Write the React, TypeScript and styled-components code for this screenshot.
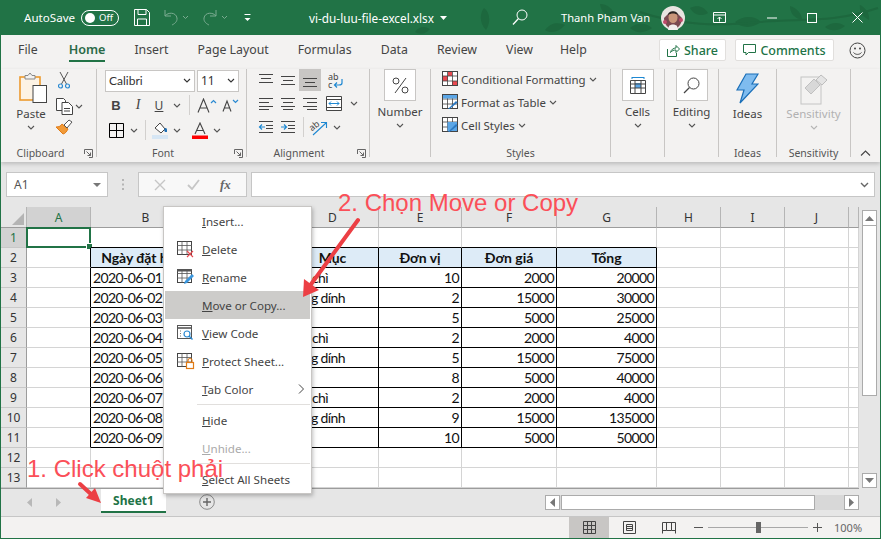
import * as React from 'react'
import styled, { createGlobalStyle } from 'styled-components'

const GlobalStyle = createGlobalStyle`
  html, body { margin: 0; padding: 0; background: #fff; }
  * { box-sizing: border-box; }
`

const UI = `"Noto Sans", "Open Sans", sans-serif`
const GREEN = '#217346'

const Frame = styled.div`
  position: relative;
  width: 881px;
  height: 539px;
  overflow: hidden;
  display: flex;
  flex-direction: column;
  border: 1px solid ${GREEN};
  border-top: 0;
  background: #f3f2f1;
  font-family: ${UI};
  font-size: 12px;
  color: #444;
`

/* title bar */
const TitleBar = styled.div`
  position: relative;
  flex: none;
  height: 35px;
  margin: 0 -1px;
  padding-left: 24px;
  display: flex;
  align-items: center;
  background: ${GREEN};
  color: #fff;
  overflow: hidden;
`
const Leaves = styled.svg`
  position: absolute;
  left: 0;
  top: 0;
`
const TitleItem = styled.div<{ $ml?: number; $size?: number }>`
  position: relative;
  flex: none;
  margin-left: ${({ $ml }) => $ml ?? 0}px;
  display: flex;
  align-items: center;
  justify-content: center;
  white-space: nowrap;
  font-size: ${({ $size }) => $size ?? 11.6}px;
`
const Toggle = styled.div`
  position: relative;
  width: 38px;
  height: 16px;
  margin-left: 6px;
  flex: none;
  border: 1px solid #fff;
  border-radius: 8px;
  font-size: 9.5px;
  line-height: 14px;
  padding-left: 17px;
  &::before {
    content: '';
    position: absolute;
    left: 3px;
    top: 2px;
    width: 10px;
    height: 10px;
    border-radius: 50%;
    background: #fff;
  }
`

/* tabs */
const TabRow = styled.div`
  flex: none;
  height: 34px;
  display: flex;
  align-items: flex-start;
  padding-left: 17px;
  gap: 29px;
`
const Tab = styled.div<{ $active?: boolean; $mr?: number }>`
  position: relative;
  height: 27px;
  line-height: 30px;
  margin-right: ${({ $mr }) => $mr ?? 0}px;
  font-size: ${({ $active }) => ($active ? 12.6 : 12.3)}px;
  white-space: nowrap;
  font-weight: ${({ $active }) => ($active ? 600 : 400)};
  color: ${({ $active }) => ($active ? '#2b6a48' : '#444')};
  border-bottom: 2px solid ${({ $active }) => ($active ? GREEN : 'transparent')};
`
const TabActions = styled.div`
  margin-left: auto;
  display: flex;
  align-items: center;
  padding-top: 4px;
  padding-right: 14px;
`
const ActionButton = styled.div<{ $w: number; $mr: number }>`
  width: ${({ $w }) => $w}px;
  height: 22px;
  margin-right: ${({ $mr }) => $mr}px;
  display: flex;
  align-items: center;
  justify-content: center;
  gap: 4px;
  background: #fff;
  border: 1px solid #e1dfdd;
  border-radius: 2px;
  color: ${GREEN};
  font-size: 12.5px;
  font-weight: 500;
`

/* ribbon */
const Ribbon = styled.div`
  position: relative;
  z-index: 1;
  flex: none;
  height: 93px;
  display: flex;
  align-items: flex-start;
  background: #f3f2f1;
  box-shadow: 0 2px 4px rgba(0, 0, 0, 0.18);
`
const Separator = styled.div`
  flex: none;
  width: 1px;
  height: 88px;
  background: #c8c6c4;
`
const Group = styled.div<{ $w: number }>`
  flex: none;
  width: ${({ $w }) => $w}px;
  height: 92px;
  display: flex;
  flex-direction: column;
`
const GroupBody = styled.div<{ $pl?: number; $col?: boolean }>`
  height: 77px;
  display: flex;
  flex-direction: ${({ $col }) => ($col ? 'column' : 'row')};
  padding-left: ${({ $pl }) => $pl ?? 0}px;
`
const GroupLabel = styled.div<{ $pr?: number }>`
  position: relative;
  height: 14px;
  line-height: 14px;
  padding-right: ${({ $pr }) => $pr ?? 0}px;
  text-align: center;
  font-size: 10.5px;
  color: #555;
`
const Launcher = styled.svg`
  position: absolute;
  right: 3px;
  top: 3px;
`
const BigColumn = styled.div`
  flex: 1;
  display: flex;
  flex-direction: column;
  align-items: center;
`
const PasteColumn = styled.div`
  width: 32px;
  margin-left: 14px;
  padding-top: 3px;
  display: flex;
  flex-direction: column;
  align-items: center;
`
const PasteIcon = styled.svg`
  flex: none;
  margin-left: 4px;
`
const BigIcon = styled.svg<{ $top: number }>`
  flex: none;
  margin-top: ${({ $top }) => $top}px;
`
const BigLabel = styled.div<{ $off?: boolean; $top?: number }>`
  height: 14px;
  line-height: 14px;
  margin-top: ${({ $top }) => $top ?? 4}px;
  margin-bottom: 4px;
  font-size: 11.5px;
  white-space: nowrap;
  color: ${({ $off }) => ($off ? '#b1b1b1' : '#444')};
`
const BoxButton = styled.div`
  width: 32px;
  height: 32px;
  display: flex;
  align-items: center;
  justify-content: center;
  background: #fff;
  border: 1px solid #c8c6c4;
`
const SmallColumn = styled.div`
  width: 40px;
  margin-left: 6px;
  display: flex;
  flex-direction: column;
`
const ToolRow = styled.div<{ $h?: number; $mt?: number }>`
  height: ${({ $h }) => $h ?? 22}px;
  margin-top: ${({ $mt }) => $mt ?? 0}px;
  display: flex;
  align-items: center;
`
const Tool = styled.div<{ $w?: number; $on?: boolean; $ml?: number }>`
  flex: none;
  width: ${({ $w }) => $w ?? 22}px;
  height: 22px;
  margin-left: ${({ $ml }) => $ml ?? 0}px;
  display: flex;
  align-items: center;
  justify-content: center;
  background: ${({ $on }) => ($on ? '#c8c6c4' : 'transparent')};
`
const BoldGlyph = styled.span`
  font-family: "Liberation Sans", sans-serif;
  font-weight: 700;
  font-size: 13px;
`
const ItalicGlyph = styled.span`
  font-family: "Liberation Serif", serif;
  font-style: italic;
  font-size: 14px;
`
const UnderGlyph = styled.span`
  font-size: 12px;
  text-decoration: underline;
`
const ToolRule = styled.div`
  flex: none;
  width: 1px;
  height: 20px;
  margin: 0 4px;
  background: #d2d0ce;
`
const ComboBox = styled.div<{ $w: number; $font: string }>`
  width: ${({ $w }) => $w}px;
  height: 22px;
  margin-right: 2px;
  padding: 0 3px;
  display: flex;
  align-items: center;
  justify-content: space-between;
  background: #fff;
  border: 1px solid #c8c6c4;
  color: #333;
  font-size: 12px;
  font-family: ${({ $font }) => $font};
`
const StyleRow = styled.div`
  height: 23px;
  padding-bottom: 3px;
  display: flex;
  align-items: center;
  gap: 3px;
  font-size: 11.45px;
  white-space: nowrap;
`
const TextGlyphs = styled.svg`
  overflow: visible;
`
const Collapse = styled.div`
  flex: 1;
  height: 92px;
  display: flex;
  align-items: flex-end;
  justify-content: center;
  padding-bottom: 5px;
`

/* formula bar */
const FormulaBar = styled.div`
  flex: none;
  height: 45px;
  display: flex;
  align-items: center;
  padding: 0 5px;
  background: #e6e6e6;
`
const NameBox = styled.div`
  width: 102px;
  height: 25px;
  padding: 0 6px 0 7px;
  display: flex;
  align-items: center;
  justify-content: space-between;
  background: #fff;
  border: 1px solid #c6c6c6;
  font-size: 12px;
  color: #555;
`
const Grip = styled.div`
  width: 30px;
  display: flex;
  justify-content: center;
`
const FxBox = styled.div`
  width: 109px;
  height: 25px;
  display: flex;
  align-items: center;
  justify-content: space-around;
  padding: 0 5px;
  background: #f8f8f8;
  border: 1px solid #c6c6c6;
  color: #666;
`
const FxLabel = styled.span`
  font-family: "Liberation Serif", serif;
  font-style: italic;
  font-weight: 700;
  font-size: 13px;
`
const FormulaInput = styled.div`
  flex: 1;
  height: 25px;
  margin-left: 4px;
  padding-right: 5px;
  display: flex;
  align-items: center;
  justify-content: flex-end;
  background: #fff;
  border: 1px solid #c6c6c6;
`

/* sheet */
const SheetArea = styled.div`
  flex: none;
  height: 282px;
  display: flex;
  background: #e6e6e6;
`
const SheetGrid = styled.div`
  flex: none;
  width: 858px;
  display: grid;
  grid-template-columns: 26px 64px 110px 86px 92px 83px 95px 100px 64px 64px 64px 9.5px;
  grid-template-rows: 21px;
  grid-auto-rows: 20px;
  background: #fff;
  border-bottom: 1px solid #9c9c9c;
  border-right: 1px solid #9c9c9c;
  font-family: Lato, "Liberation Sans", sans-serif;
  font-size: 14px;
  letter-spacing: -0.6px;
  color: #111;
`
const Corner = styled.div`
  position: relative;
  background: #e6e6e6;
  border-right: 1px solid #b5b5b5;
  border-bottom: 1px solid #9c9c9c;
  &::after {
    content: '';
    position: absolute;
    right: 2px;
    bottom: 2px;
    border-style: solid;
    border-width: 0 0 12px 12px;
    border-color: transparent transparent #b4b4b4 transparent;
  }
`
const ColHead = styled.div<{ $on?: boolean }>`
  display: flex;
  align-items: center;
  justify-content: center;
  letter-spacing: 0;
  background: ${({ $on }) => ($on ? '#d2d2d2' : '#e6e6e6')};
  border-right: 1px solid #b5b5b5;
  border-bottom: 1px solid #9c9c9c;
  color: ${({ $on }) => ($on ? GREEN : '#333')};
  font-family: ${UI};
  font-size: 12px;
`
const RowHead = styled.div<{ $on?: boolean }>`
  display: flex;
  align-items: center;
  justify-content: center;
  letter-spacing: 0;
  background: ${({ $on }) => ($on ? '#d2d2d2' : '#e6e6e6')};
  border-right: 1px solid #9c9c9c;
  border-bottom: 1px solid #c8c8c8;
  color: ${({ $on }) => ($on ? GREEN : '#333')};
  font-family: ${UI};
  font-size: 12px;
`
const Cell = styled.div<{
  $blackRight?: boolean
  $blackBottom?: boolean
  $align?: string
  $head?: boolean
  $selected?: boolean
}>`
  position: relative;
  min-width: 0;
  padding: 0 2px;
  line-height: 20px;
  white-space: nowrap;
  overflow: ${({ $head, $selected }) => ($head || $selected ? 'visible' : 'hidden')};
  text-align: ${({ $align }) => $align ?? 'left'};
  font-weight: ${({ $head }) => ($head ? 700 : 400)};
  letter-spacing: ${({ $head }) => ($head ? '-0.05px' : 'inherit')};
  background: ${({ $head }) => ($head ? '#ddebf7' : 'transparent')};
  border-right: 1px solid ${({ $blackRight }) => ($blackRight ? '#000' : '#d4d4d4')};
  border-bottom: 1px solid ${({ $blackBottom }) => ($blackBottom ? '#000' : '#d4d4d4')};
  ${({ $selected }) =>
    $selected &&
    `
    &::before {
      content: '';
      position: absolute;
      left: -1px;
      top: -1px;
      right: -1px;
      bottom: -1px;
      border: 2px solid ${GREEN};
    }
    &::after {
      content: '';
      position: absolute;
      right: -3px;
      bottom: -3px;
      width: 5px;
      height: 5px;
      background: ${GREEN};
      border: 1px solid #fff;
    }
  `}
`
const VScroll = styled.div`
  flex: 1;
  padding: 3px 3px 1px 3px;
  display: flex;
  flex-direction: column;
`
const ScrollButton = styled.div<{ $w?: number; $h?: number }>`
  flex: none;
  width: ${({ $w }) => ($w ? `${$w}px` : '100%')};
  height: ${({ $h }) => ($h ? `${$h}px` : '100%')};
  display: flex;
  align-items: center;
  justify-content: center;
  background: #fff;
  border: 1px solid #ababab;
`
const VThumb = styled.div`
  height: 170px;
  background: #fff;
  border: 1px solid #ababab;
  border-top: 0;
`
const VTrack = styled.div`
  flex: 1;
`

/* sheet tabs */
const TabBar = styled.div`
  flex: none;
  height: 28px;
  display: flex;
  align-items: flex-start;
  padding-right: 21px;
  background: #e6e6e6;
  border-bottom: 1px solid #c6c6c6;
`
const NavArrows = styled.div`
  width: 100px;
  height: 26px;
  padding-left: 26px;
  display: flex;
  align-items: center;
  gap: 24px;
`
const SheetTab = styled.div`
  width: 65px;
  height: 24px;
  line-height: 23px;
  text-align: center;
  background: #fff;
  border-bottom: 2px solid ${GREEN};
  color: ${GREEN};
  font-size: 12px;
  font-weight: 700;
`
const AddSheet = styled.div`
  margin-left: 33px;
  margin-top: 5px;
  width: 16px;
  height: 16px;
`
const HScroll = styled.div`
  margin-left: auto;
  margin-top: 6px;
  width: 314px;
  height: 15px;
  display: flex;
  background: #d8d8d8;
`
const HThumb = styled.div`
  width: 254px;
  margin-left: 1px;
  background: #fff;
  border: 1px solid #ababab;
`
const HTrack = styled.div`
  flex: 1;
`

/* status bar */
const StatusBar = styled.div`
  flex: 1;
  display: flex;
  align-items: stretch;
  padding-left: 568px;
  font-size: 11px;
  color: #555;
`
const ViewButton = styled.div<{ $on?: boolean }>`
  width: 40px;
  display: flex;
  align-items: center;
  justify-content: center;
  background: ${({ $on }) => ($on ? '#c8c6c4' : 'transparent')};
`
const ZoomSlider = styled.div`
  width: 145px;
  padding-left: 5px;
  display: flex;
  align-items: center;
  gap: 5px;
`
const SliderTrack = styled.div`
  position: relative;
  width: 100px;
  height: 1px;
  background: #a8a8a8;
  &::after {
    content: '';
    position: absolute;
    left: 48px;
    top: -5px;
    width: 5px;
    height: 11px;
    background: #666;
  }
`
const ZoomPercent = styled.div`
  line-height: 21px;
  color: #666;
`

/* context menu */
const Menu = styled.div`
  position: absolute;
  left: 162px;
  top: 206px;
  z-index: 3;
  width: 149px;
  padding: 0 1px;
  background: #fff;
  border: 1px solid #c8c6c4;
  box-shadow: 1px 2px 4px rgba(0, 0, 0, 0.25);
  color: #444;
  font-size: 11.6px;
`
const MenuItem = styled.div<{ $hover?: boolean; $off?: boolean }>`
  height: 28px;
  padding-left: 12px;
  padding-right: 6px;
  display: flex;
  align-items: center;
  gap: 9px;
  white-space: nowrap;
  background: ${({ $hover }) => ($hover ? '#cdccca' : 'transparent')};
  color: ${({ $off }) => ($off ? '#aaa' : '#444')};
`
const MenuIconSlot = styled.div`
  flex: none;
  width: 16px;
  height: 16px;
`
const MenuLabel = styled.span`
  flex: 1;
`
const MenuRule = styled.div`
  height: 1px;
  margin: 1px 0 1px 32px;
  background: #e1dfdd;
`

/* red notes drawn over the screenshot */
const Note = styled.div<{ $left: number; $top: number }>`
  position: absolute;
  z-index: 4;
  left: ${({ $left }) => $left}px;
  top: ${({ $top }) => $top}px;
  font-family: "Liberation Sans", Arial, sans-serif;
  font-size: 24px;
  line-height: 28px;
  white-space: nowrap;
  color: #fb4f58;
`
const Arrows = styled.svg`
  position: absolute;
  z-index: 4;
  left: -1px;
  top: 0;
  pointer-events: none;
`

const Chevron = ({ color = '#555' }: { color?: string }) => (
  <svg width="8" height="5" viewBox="0 0 8 5">
    <path d="M1 1l3 3 3-3" fill="none" stroke={color} strokeWidth="1.1" />
  </svg>
)

const Lines = ({ rows }: { rows: [number, number, number][] }) => (
  <svg width="16" height="16" viewBox="0 0 16 16">
    {rows.map(([x1, x2, y], i) => (
      <path key={i} d={`M${x1} ${y + 0.5}H${x2}`} stroke="#444" strokeWidth="1" />
    ))}
  </svg>
)

const Indent = ({ dir }: { dir: 'in' | 'out' }) => (
  <svg width="16" height="14" viewBox="0 0 16 14">
    <path d="M1 1.5h14M8 5.5h7M8 8.5h7M1 12.5h14" stroke="#444" fill="none" />
    <path
      d={dir === 'out' ? 'M7 7H1.5M4 4.5L1.5 7 4 9.5' : 'M1 7h5.5M4 4.5L6.5 7 4 9.5'}
      stroke="#1e88d2"
      strokeWidth="1.2"
      fill="none"
    />
  </svg>
)

const TableIcon = ({ fill }: { fill: string }) => (
  <svg width="16" height="16" viewBox="0 0 16 16">
    <rect x="0.5" y="0.5" width="15" height="14" fill="#fff" stroke="#444" />
    <path d="M0 5h16M0 10h16M5.5 0v15M10.5 0v15" stroke="#444" strokeWidth="0.8" />
    <path d={fill} fill="#5ba6e6" />
    <path d="M6 15l8-8 1.6 1.6-8 6.4z" fill="#2b78c2" />
  </svg>
)

const LauncherIcon = () => (
  <Launcher width="9" height="9" viewBox="0 0 9 9">
    <path d="M.5 5V.5H8.5V8.5H5M2.5 2.5l4 4M6.5 3.5v3h-3" fill="none" stroke="#666" />
  </Launcher>
)

const MenuTable = ({ children }: { children?: React.ReactNode }) => (
  <svg width="18" height="17" viewBox="0 0 18 17">
    <rect x="0.5" y="0.5" width="14" height="13" fill="#fff" stroke="#444" />
    <path d="M0 4.5h15M0 9h15M5 0v14M10 0v14" stroke="#555" strokeWidth="0.8" />
    {children}
  </svg>
)

const columns = ['A', 'B', 'C', 'D', 'E', 'F', 'G', 'H', 'I', 'J']
const items = ['Bút chì', 'Băng dính', 'Vở']
const units = [10, 2, 5, 2, 5, 8, 2, 9, 10]
const prices = [2000, 15000, 5000]

const headRow = ['Ngày đặt hàng', '', 'Mục', 'Đơn vị', 'Đơn giá', 'Tổng']

const renderBlanks = (key: number) =>
  [0, 1, 2, 3].map((i) => <Cell key={`${key}-t${i}`} />)

const SheetRows = () => {
  const rows: React.ReactNode[] = []
  for (let r = 1; r <= 13; r++) {
    const cells: React.ReactNode[] = [
      <RowHead key={`h${r}`} $on={r === 1}>
        {r}
      </RowHead>,
    ]
    if (r === 1) {
      cells.push(<Cell key="a1" $selected />)
      for (let c = 1; c <= 6; c++) cells.push(<Cell key={`r1-${c}`} $blackBottom />)
    } else if (r === 2) {
      cells.push(<Cell key="a2" $blackRight />)
      headRow.forEach((text, i) =>
        cells.push(
          <Cell key={`t${i}`} $head $blackRight $blackBottom $align="center">
            {text}
          </Cell>,
        ),
      )
    } else if (r <= 11) {
      const i = r - 3
      const unit = units[i]
      const price = prices[i % 3]
      const date = `2020-06-0${i + 1}`
      const values = [date, '', items[i % 3], unit, price, unit * price]
      cells.push(<Cell key={`a${r}`} $blackRight />)
      values.forEach((v, c) =>
        cells.push(
          <Cell key={`v${r}-${c}`} $blackRight $blackBottom $align={c > 2 ? 'right' : 'left'}>
            {v}
          </Cell>,
        ),
      )
    } else {
      for (let c = 0; c < 7; c++) cells.push(<Cell key={`e${r}-${c}`} />)
    }
    cells.push(...renderBlanks(r))
    rows.push(<React.Fragment key={r}>{cells}</React.Fragment>)
  }
  return <>{rows}</>
}

export default function App() {
  return (
    <>
      <GlobalStyle />
      <Frame>
        <TitleBar>
          <Leaves width="881" height="35" viewBox="0 0 881 35">
            <g fill="#1b6139" opacity="0.6">
              <path d="M415 32c4-6 10-6 15-3-4 5-10 6-15 3zM484 8c6 4 7 14 2 22-6-6-7-15-2-22zM545 30c6-8 14-8 20-5-6 7-14 9-20 5zM600 4c8 0 14 6 15 13-8 0-14-5-15-13zM630 28c8-6 16-5 22 0-7 5-15 6-22 0zM690 8c8-4 14-1 18 5-7 4-14 2-18-5zM735 22c9-7 20-6 26 0-8 6-18 7-26 0zM790 6c7 2 12 8 12 14-8-2-12-7-12-14zM825 27c7-5 14-5 20-1-6 5-14 6-20 1zM860 5c6 3 10 9 9 15-6-3-10-8-9-15z" />
              <path d="M640 12c40 14 80 14 120 10s70 2 118-14" fill="none" stroke="#1b6139" strokeWidth="2" />
            </g>
          </Leaves>
          <TitleItem>AutoSave</TitleItem>
          <Toggle>Off</Toggle>
          <TitleItem $ml={15}>
            <svg width="16" height="17" viewBox="0 0 16 17">
              <path d="M.5.5h12l3 3v13H.5zM4 .5v5h8v-5M3.5 16.5V10h9v6.500" fill="none" stroke="#fff" />
            </svg>
          </TitleItem>
          <TitleItem $ml={13}>
            <svg width="26" height="17" viewBox="0 0 26 17" opacity="0.4">
              <path d="M2 1v6h6M2 7c3-4 11-4 12 2 .5 4-3 6-5 7" fill="none" stroke="#fff" />
              <path d="M20 7l2.5 2.5L25 7" fill="none" stroke="#fff" />
            </svg>
          </TitleItem>
          <TitleItem $ml={13}>
            <svg width="26" height="17" viewBox="0 0 26 17" opacity="0.4">
              <path d="M14 1v6H8M14 7c-3-4-11-4-12 2-.5 4 3 6 5 7" fill="none" stroke="#fff" />
              <path d="M20 7l2.5 2.5L25 7" fill="none" stroke="#fff" />
            </svg>
          </TitleItem>
          <TitleItem $ml={15}>
            <svg width="9" height="8" viewBox="0 0 9 8">
              <path d="M1.5 .5h6" stroke="#fff" strokeWidth="1" />
              <path d="M1.5 4h6L4.5 7z" fill="#fff" />
            </svg>
          </TitleItem>
          <TitleItem $ml={57} $size={11.75}>vi-du-luu-file-excel.xlsx</TitleItem>
          <TitleItem $ml={6}>
            <svg width="7" height="4" viewBox="0 0 7 4">
              <path d="M0 0h7L3.5 4z" fill="#fff" />
            </svg>
          </TitleItem>
          <TitleItem $ml={65}>
            <svg width="16" height="17" viewBox="0 0 16 17">
              <circle cx="10" cy="6" r="5" fill="none" stroke="#fff" />
              <path d="M6.5 9.500L1 15.500" stroke="#fff" strokeWidth="1.3" />
            </svg>
          </TitleItem>
          <TitleItem $ml={33} $size={11.2}>Thanh Pham Van</TitleItem>
          <TitleItem $ml={11}>
            <svg width="24" height="24" viewBox="0 0 24 24">
              <circle cx="12" cy="12" r="12" fill="#e8e4e0" />
              <path d="M3 12c0 6 4 11 9 11s9-5 9-11l-4-4H7z" fill="#7b4a50" />
              <circle cx="4" cy="16" r="2" fill="#c04a6a" />
              <circle cx="20" cy="14" r="2" fill="#c04a6a" />
              <ellipse cx="12" cy="11.5" rx="4.5" ry="5.5" fill="#c9967a" />
              <path d="M7 9c0-5 10-5 10 0-3-2-7-2-10 0z" fill="#2b2422" />
              <path d="M8 20c2-2 6-2 8 0l1 4H7z" fill="#f2efee" />
            </svg>
          </TitleItem>
          <TitleItem $ml={28}>
            <svg width="13" height="11" viewBox="0 0 13 11">
              <path d="M.5 .5h12v10H.5zM.5 3h12M6.5 9.500V5M4.500 7l2-2 2 2" fill="none" stroke="#fff" />
            </svg>
          </TitleItem>
          <TitleItem $ml={41}>
            <svg width="10" height="2" viewBox="0 0 10 2">
              <path d="M0 1h10" stroke="#fff" />
            </svg>
          </TitleItem>
          <TitleItem $ml={30}>
            <svg width="10" height="10" viewBox="0 0 10 10">
              <rect x=".5" y=".5" width="9" height="9" fill="none" stroke="#fff" />
            </svg>
          </TitleItem>
          <TitleItem $ml={35}>
            <svg width="11" height="11" viewBox="0 0 11 11">
              <path d="M.5 .5l10 10M10.5 .5l-10 10" stroke="#fff" />
            </svg>
          </TitleItem>
        </TitleBar>

        <TabRow>
          <Tab $mr={2}>File</Tab>
          <Tab $active>Home</Tab>
          <Tab>Insert</Tab>
          <Tab>Page Layout</Tab>
          <Tab>Formulas</Tab>
          <Tab>Data</Tab>
          <Tab>Review</Tab>
          <Tab $mr={-2}>View</Tab>
          <Tab>Help</Tab>
          <TabActions>
            <ActionButton $w={67} $mr={9}>
              <svg width="13" height="13" viewBox="0 0 13 13">
                <path d="M.5 5v7.500h9V9M3.500 8.500c.5-3 3-4.500 5.500-4.500V1.500L12.500 5 9 8.500V6c-2 0-4 .5-5.500 2.500z" fill="none" stroke={GREEN} />
              </svg>
              Share
            </ActionButton>
            <ActionButton $w={99} $mr={15}>
              <svg width="13" height="12" viewBox="0 0 13 12">
                <path d="M.5 .5h12v8H5.500L3 11V8.500H.5z" fill="none" stroke={GREEN} />
              </svg>
              Comments
            </ActionButton>
            <svg width="17" height="17" viewBox="0 0 17 17">
              <circle cx="8.5" cy="8.5" r="7.5" fill="none" stroke="#444" />
              <circle cx="6" cy="6.5" r="1" fill="#444" />
              <circle cx="11" cy="6.5" r="1" fill="#444" />
              <path d="M4.500 10.500c2 2.500 6 2.500 8 0" fill="none" stroke="#444" />
            </svg>
          </TabActions>
        </TabRow>

        <Ribbon>
          <Group $w={95}>
            <GroupBody>
              <PasteColumn>
                <PasteIcon width="28" height="33" viewBox="0 0 28 33">
                  <rect x="1" y="5" width="20" height="23" fill="#fdf3e4" stroke="#ed9a2e" strokeWidth="1.6" />
                  <path d="M6 7V3.500h3L11 1l2 2.500h3V7z" fill="#f3f2f1" stroke="#888" />
                  <rect x="14" y="13.5" width="13.5" height="17" fill="#fff" stroke="#444" />
                </PasteIcon>
                <BigLabel $top={2}>Paste</BigLabel>
                <Chevron />
              </PasteColumn>
              <SmallColumn>
                <ToolRow>
                  <Tool>
                    <svg width="12" height="17" viewBox="0 0 12 17">
                      <path d="M2 0l6.500 12M10 0L3.500 12" stroke="#555" fill="none" />
                      <circle cx="2.5" cy="14" r="2" fill="none" stroke="#2b8ad2" strokeWidth="1.2" />
                      <circle cx="9.5" cy="14" r="2" fill="none" stroke="#2b8ad2" strokeWidth="1.2" />
                    </svg>
                  </Tool>
                </ToolRow>
                <ToolRow $mt={4}>
                  <Tool>
                    <svg width="17" height="17" viewBox="0 0 17 17">
                      <path d="M6 12.500H.5V.5h7l2 2V4" fill="#fff" stroke="#444" />
                      <path d="M6 4.500h6.500l4 4v8H6z" fill="#fff" stroke="#444" />
                      <path d="M8 10.500h6M8 13h6" stroke="#444" />
                    </svg>
                  </Tool>
                  <Chevron />
                </ToolRow>
                <ToolRow $h={20}>
                  <Tool>
                    <svg width="17" height="16" viewBox="0 0 17 16">
                      <path d="M0 8c3 0 5-1 6-3l6 5c-1 2-3 5-5 5z" fill="#f19a38" stroke="#e07b16" />
                      <path d="M8 6l5-5 3 2-5 6z" fill="#fff" stroke="#555" />
                    </svg>
                  </Tool>
                </ToolRow>
              </SmallColumn>
            </GroupBody>
            <GroupLabel $pr={16}>
              Clipboard
              <LauncherIcon />
            </GroupLabel>
          </Group>
          <Separator />

          <Group $w={149}>
            <GroupBody $pl={8} $col>
              <ToolRow $h={23}>
                <ComboBox $w={90} $font="Lato, sans-serif">
                  Calibri
                  <Chevron color="#333" />
                </ComboBox>
                <ComboBox $w={42} $font={UI}>
                  11
                  <Chevron color="#333" />
                </ComboBox>
              </ToolRow>
              <ToolRow $mt={2}>
                <Tool><BoldGlyph>B</BoldGlyph></Tool>
                <Tool><ItalicGlyph>I</ItalicGlyph></Tool>
                <Tool $w={20}><UnderGlyph>U</UnderGlyph></Tool>
                <Tool $w={16}><Chevron /></Tool>
                <ToolRule />
                <Tool $w={26}>
                  <svg width="20" height="15" viewBox="0 0 20 15">
                    <path d="M1 14.500L6.500 1 12 14.500M3 10h7" fill="none" stroke="#444" strokeWidth="1.1" />
                    <path d="M14 5l2.500-2.500L19 5" fill="none" stroke="#2b8ad2" strokeWidth="1.2" />
                  </svg>
                </Tool>
                <Tool>
                  <svg width="18" height="13" viewBox="0 0 18 13">
                    <path d="M1 12.500L5 2l4 10.500M2.500 9h5" fill="none" stroke="#444" strokeWidth="1.1" />
                    <path d="M11 1l2.500 2.500L16 1" fill="none" stroke="#2b8ad2" strokeWidth="1.2" />
                  </svg>
                </Tool>
              </ToolRow>
              <ToolRow $mt={3}>
                <Tool>
                  <svg width="15" height="15" viewBox="0 0 15 15">
                    <path d="M.5 .5h14v14H.5zM7.500 0v15M0 7.500h15" fill="none" stroke="#000" />
                  </svg>
                </Tool>
                <Tool $w={14}><Chevron /></Tool>
                <ToolRule />
                <Tool $w={20}>
                  <svg width="16" height="17" viewBox="0 0 16 17">
                    <rect y="13" width="16" height="4" fill="#d6e6f4" />
                    <path d="M3 6l5-5 5 6-4 4z" fill="#fff" stroke="#444" />
                    <path d="M12 8c1-3 3-2 3 0v2h-2z" fill="#1f6fb5" />
                  </svg>
                </Tool>
                <Tool $w={14}><Chevron /></Tool>
                <Tool $w={20} $ml={6}>
                  <svg width="16" height="17" viewBox="0 0 16 17">
                    <path d="M3 12L8 1l5 11M5 8.500h6" fill="none" stroke="#444" strokeWidth="1.1" />
                    <rect y="13.5" width="16" height="3.5" fill="#f00" />
                  </svg>
                </Tool>
                <Tool $w={14}><Chevron /></Tool>
              </ToolRow>
            </GroupBody>
            <GroupLabel $pr={17}>
              Font
              <LauncherIcon />
            </GroupLabel>
          </Group>
          <Separator />

          <Group $w={122}>
            <GroupBody $pl={8} $col>
              <ToolRow>
                <Tool><Lines rows={[[1, 15, 2], [3, 13, 6], [1, 15, 10]]} /></Tool>
                <Tool><Lines rows={[[1, 15, 4], [3, 13, 8], [1, 15, 12]]} /></Tool>
                <Tool $on><Lines rows={[[1, 15, 6], [3, 13, 10], [1, 15, 14]]} /></Tool>
                <Tool $w={30}>
                  <TextGlyphs width="16" height="17" viewBox="0 0 16 17">
                    <text x="0" y="8" fontFamily="Noto Sans" fontSize="9" fill="#444">ab</text>
                    <text x="0" y="16" fontFamily="Noto Sans" fontSize="9" fill="#444">c</text>
                    <path d="M14 7v4c0 2-2 2-3 2H7M9 10.500L6.500 13 9 15.500" fill="none" stroke="#1e88d2" strokeWidth="1.2" />
                  </TextGlyphs>
                </Tool>
              </ToolRow>
              <ToolRow $mt={1}>
                <Tool><Lines rows={[[1, 15, 3], [1, 11, 7], [1, 15, 11], [1, 11, 14]]} /></Tool>
                <Tool><Lines rows={[[1, 15, 3], [3, 13, 7], [1, 15, 11], [3, 13, 14]]} /></Tool>
                <Tool><Lines rows={[[1, 15, 3], [5, 15, 7], [1, 15, 11], [5, 15, 14]]} /></Tool>
                <Tool $w={26}>
                  <svg width="16" height="15" viewBox="0 0 16 15">
                    <path d="M.5 .5h15v14H.5zM0 3.500h16M0 11.500h16" fill="#fff" stroke="#444" />
                    <path d="M3 7.500h10M5 5.500l-2 2 2 2M11 5.500l2 2-2 2" fill="none" stroke="#1e88d2" />
                  </svg>
                </Tool>
                <Tool $w={14}><Chevron /></Tool>
              </ToolRow>
              <ToolRow $mt={2}>
                <Tool><Indent dir="out" /></Tool>
                <Tool><Indent dir="in" /></Tool>
                <ToolRule />
                <Tool>
                  <TextGlyphs width="18" height="17" viewBox="0 0 18 17">
                    <text x="0" y="9" fontFamily="Noto Sans" fontSize="9" fill="#444" transform="rotate(-40 6 8)">ab</text>
                    <path d="M3 16L16 4M11 3.500h5.500V9" fill="none" stroke="#1e88d2" strokeWidth="1.1" />
                  </TextGlyphs>
                </Tool>
                <Tool $w={14}><Chevron /></Tool>
              </ToolRow>
            </GroupBody>
            <GroupLabel $pr={18}>
              Alignment
              <LauncherIcon />
            </GroupLabel>
          </Group>
          <Separator />

          <Group $w={60}>
            <GroupBody>
              <BigColumn>
                <BoxButton>
                  <svg width="17" height="17" viewBox="0 0 17 17">
                    <circle cx="4" cy="4" r="3" fill="none" stroke="#444" />
                    <circle cx="13" cy="13" r="3" fill="none" stroke="#444" />
                    <path d="M14 1L3 16" stroke="#444" />
                  </svg>
                </BoxButton>
                <BigLabel>Number</BigLabel>
                <Chevron />
              </BigColumn>
            </GroupBody>
          </Group>
          <Separator />

          <Group $w={179}>
            <GroupBody $pl={11} $col>
              <StyleRow>
                <svg width="16" height="16" viewBox="0 0 16 16">
                  <rect x="0.5" y="0.5" width="15" height="14" fill="#fff" stroke="#444" />
                  <rect x="1" y="5" width="5" height="5" fill="#e8484f" />
                  <rect x="6" y="1" width="4" height="4" fill="#e8484f" />
                  <rect x="10" y="10" width="5" height="4" fill="#e8484f" />
                  <path d="M0 5h16M0 10h16M5.500 0v15M10.500 0v15" stroke="#444" strokeWidth="0.8" />
                </svg>
                Conditional Formatting
                <Chevron />
              </StyleRow>
              <StyleRow>
                <TableIcon fill="M1 1h14v3.500H1z" />
                Format as Table
                <Chevron />
              </StyleRow>
              <StyleRow>
                <TableIcon fill="M5.500 5h9.500v9H5.500z" />
                Cell Styles
                <Chevron />
              </StyleRow>
            </GroupBody>
            <GroupLabel>Styles</GroupLabel>
          </Group>
          <Separator />

          <Group $w={53}>
            <GroupBody>
              <BigColumn>
                <BoxButton>
                  <svg width="16" height="17" viewBox="0 0 16 17">
                    <path d="M2 .5h12M2 0v2M14 0v2" stroke="#1e88d2" />
                    <rect x="5" y="6" width="6" height="5" fill="#5ba6e6" />
                    <path d="M.5 3.500h15v13H.5zM0 7h16M0 11h16M5 3v14M11 3v14" fill="none" stroke="#444" />
                  </svg>
                </BoxButton>
                <BigLabel>Cells</BigLabel>
                <Chevron />
              </BigColumn>
            </GroupBody>
          </Group>
          <Separator />

          <Group $w={53}>
            <GroupBody>
              <BigColumn>
                <BoxButton>
                  <svg width="17" height="17" viewBox="0 0 17 17">
                    <circle cx="10.5" cy="6.5" r="5.5" fill="none" stroke="#444" />
                    <path d="M6.500 10.500L1 16" stroke="#444" strokeWidth="1.3" />
                  </svg>
                </BoxButton>
                <BigLabel>Editing</BigLabel>
                <Chevron />
              </BigColumn>
            </GroupBody>
          </Group>
          <Separator />

          <Group $w={57}>
            <GroupBody>
              <BigColumn>
                <BigIcon $top={4} width="23" height="32" viewBox="0 0 23 32">
                  <path d="M10 1h12l-6 10h6L4 30l4-13H1z" fill="#7fbcef" stroke="#1a6fb8" strokeWidth="1.2" />
                </BigIcon>
                <BigLabel $top={2}>Ideas</BigLabel>
              </BigColumn>
            </GroupBody>
            <GroupLabel>Ideas</GroupLabel>
          </Group>
          <Separator />

          <Group $w={73}>
            <GroupBody>
              <BigColumn>
                <BigIcon $top={3} width="28" height="33" viewBox="0 0 28 33">
                  <rect x="1" y="5" width="20" height="27" fill="#f3f2f1" stroke="#c4c4c4" />
                  <path d="M5 16l9-9 6 6-9 9z" fill="#d8d8d8" stroke="#c0c0c0" />
                  <path d="M16 8l5-5 6 5-5 5z" fill="#e4e4e4" stroke="#bdbdbd" />
                </BigIcon>
                <BigLabel $off $top={2}>Sensitivity</BigLabel>
                <Chevron color="#b5b5b5" />
              </BigColumn>
            </GroupBody>
            <GroupLabel>Sensitivity</GroupLabel>
          </Group>
          <Separator />
          <Collapse>
            <svg width="11" height="6" viewBox="0 0 11 6">
              <path d="M1 5.500l4.500-4.500L10 5.500" fill="none" stroke="#444" strokeWidth="1.1" />
            </svg>
          </Collapse>
        </Ribbon>

        <FormulaBar>
          <NameBox>
            A1
            <svg width="8" height="4" viewBox="0 0 8 4">
              <path d="M0 0h8L4 4z" fill="#777" />
            </svg>
          </NameBox>
          <Grip>
            <svg width="2" height="11" viewBox="0 0 2 11">
              <path d="M0 0h2v2H0zM0 4.500h2v2H0zM0 9h2v2H0z" fill="#b5b5b5" />
            </svg>
          </Grip>
          <FxBox>
            <svg width="12" height="12" viewBox="0 0 12 12">
              <path d="M1 1l10 10M11 1L1 11" stroke="#c6c6c6" strokeWidth="1.4" />
            </svg>
            <svg width="13" height="11" viewBox="0 0 13 11">
              <path d="M1 6l4 4 7-9" fill="none" stroke="#c6c6c6" strokeWidth="1.8" />
            </svg>
            <FxLabel>fx</FxLabel>
          </FxBox>
          <FormulaInput>
            <svg width="9" height="6" viewBox="0 0 9 6">
              <path d="M1 1l3.500 3.500L8 1" fill="none" stroke="#666" strokeWidth="1.4" />
            </svg>
          </FormulaInput>
        </FormulaBar>

        <SheetArea>
          <SheetGrid>
            <Corner />
            {columns.map((c) => (
              <ColHead key={c} $on={c === 'A'}>
                {c}
              </ColHead>
            ))}
            <ColHead />
            <SheetRows />
          </SheetGrid>
          <VScroll>
            <ScrollButton $h={16}>
              <svg width="9" height="5" viewBox="0 0 9 5">
                <path d="M4.500 0L9 5H0z" fill="#777" />
              </svg>
            </ScrollButton>
            <VThumb />
            <VTrack />
            <ScrollButton $h={15}>
              <svg width="9" height="5" viewBox="0 0 9 5">
                <path d="M0 0h9L4.500 5z" fill="#777" />
              </svg>
            </ScrollButton>
          </VScroll>
        </SheetArea>

        <TabBar>
          <NavArrows>
            <svg width="5" height="9" viewBox="0 0 5 9">
              <path d="M5 0v9L0 4.500z" fill="#b8b8b8" />
            </svg>
            <svg width="5" height="9" viewBox="0 0 5 9">
              <path d="M0 0v9l5-4.500z" fill="#b8b8b8" />
            </svg>
          </NavArrows>
          <SheetTab>Sheet1</SheetTab>
          <AddSheet>
            <svg width="16" height="16" viewBox="0 0 16 16">
              <circle cx="8" cy="8" r="7.3" fill="none" stroke="#8a8a8a" />
              <path d="M4 8h8M8 4v8" stroke="#666" strokeWidth="1.4" />
            </svg>
          </AddSheet>
          <HScroll>
            <ScrollButton $w={15} $h={15}>
              <svg width="5" height="9" viewBox="0 0 5 9">
                <path d="M5 0v9L0 4.500z" fill="#777" />
              </svg>
            </ScrollButton>
            <HThumb />
            <HTrack />
            <ScrollButton $w={15} $h={15}>
              <svg width="5" height="9" viewBox="0 0 5 9">
                <path d="M0 0v9l5-4.500z" fill="#777" />
              </svg>
            </ScrollButton>
          </HScroll>
        </TabBar>

        <StatusBar>
          <ViewButton $on>
            <svg width="13" height="13" viewBox="0 0 13 13">
              <path d="M.5 .5h12v12H.5zM4.500 0v13M8.500 0v13M0 4.500h13M0 8.500h13" fill="none" stroke="#444" />
            </svg>
          </ViewButton>
          <ViewButton>
            <svg width="13" height="13" viewBox="0 0 13 13">
              <path d="M.5 .5h12v12H.5zM3.500 3.500h6v6h-6zM3.500 5.500h6M3.500 7.500h6" fill="none" stroke="#444" />
            </svg>
          </ViewButton>
          <ViewButton>
            <svg width="14" height="12" viewBox="0 0 14 12">
              <path d="M.5 11.500V.5h13v11M.5 8.500h4V.5M9.500 .5v8h4M4.500 8.500h5" fill="none" stroke="#444" />
            </svg>
          </ViewButton>
          <ZoomSlider>
            <svg width="9" height="9" viewBox="0 0 9 9">
              <path d="M0 4.500h9" stroke="#555" />
            </svg>
            <SliderTrack />
            <svg width="9" height="9" viewBox="0 0 9 9">
              <path d="M0 4.500h9M4.500 0v9" stroke="#555" />
            </svg>
          </ZoomSlider>
          <ZoomPercent>100%</ZoomPercent>
        </StatusBar>

        <Menu>
          <MenuItem>
            <MenuIconSlot />
            <MenuLabel><u>I</u>nsert...</MenuLabel>
          </MenuItem>
          <MenuItem>
            <MenuIconSlot>
              <MenuTable>
                <path d="M10 10l6 6M16 10l-6 6" stroke="#e8484f" strokeWidth="1.2" />
              </MenuTable>
            </MenuIconSlot>
            <MenuLabel><u>D</u>elete</MenuLabel>
          </MenuItem>
          <MenuItem>
            <MenuIconSlot>
              <MenuTable>
                <path d="M0 0h15v2.500H0z" fill="#555" />
                <path d="M7 15l1-3 7-7 2 2-7 7z" fill="#3a96dd" />
              </MenuTable>
            </MenuIconSlot>
            <MenuLabel><u>R</u>ename</MenuLabel>
          </MenuItem>
          <MenuItem $hover>
            <MenuIconSlot />
            <MenuLabel><u>M</u>ove or Copy...</MenuLabel>
          </MenuItem>
          <MenuItem>
            <MenuIconSlot>
              <svg width="18" height="17" viewBox="0 0 18 17">
                <rect x="0.5" y="0.5" width="14" height="13" fill="#fff" stroke="#555" />
                <path d="M0 3h15" stroke="#555" strokeWidth="1.6" />
                <path d="M3 6h1M3 8.500h1M3 11h1" stroke="#777" />
                <circle cx="10" cy="9" r="3" fill="#fff" stroke="#2b8ad2" strokeWidth="1.2" />
                <path d="M12 11l3.500 3.500" stroke="#2b8ad2" strokeWidth="1.4" />
              </svg>
            </MenuIconSlot>
            <MenuLabel><u>V</u>iew Code</MenuLabel>
          </MenuItem>
          <MenuItem>
            <MenuIconSlot>
              <MenuTable>
                <rect x="9.5" y="9.5" width="7" height="6" fill="#fff" stroke="#e07b16" strokeWidth="1.2" />
                <path d="M11 9.500V7.500a2 2 0 0 1 4 0v2" fill="none" stroke="#e07b16" strokeWidth="1.2" />
              </MenuTable>
            </MenuIconSlot>
            <MenuLabel><u>P</u>rotect Sheet...</MenuLabel>
          </MenuItem>
          <MenuItem>
            <MenuIconSlot />
            <MenuLabel><u>T</u>ab Color</MenuLabel>
            <svg width="6" height="10" viewBox="0 0 6 10">
              <path d="M1 .5L5.500 5 1 9.500" fill="none" stroke="#444" />
            </svg>
          </MenuItem>
          <MenuRule />
          <MenuItem>
            <MenuIconSlot />
            <MenuLabel><u>H</u>ide</MenuLabel>
          </MenuItem>
          <MenuItem $off>
            <MenuIconSlot />
            <MenuLabel><u>U</u>nhide...</MenuLabel>
          </MenuItem>
          <MenuRule />
          <MenuItem>
            <MenuIconSlot />
            <MenuLabel><u>S</u>elect All Sheets</MenuLabel>
          </MenuItem>
        </Menu>

        <Note $left={26} $top={455}>1. Click chuột phải</Note>
        <Note $left={337} $top={189}>2. Chọn Move or Copy</Note>
        <Arrows width="881" height="539" viewBox="0 0 881 539">
          <path d="M358 220L309 287" stroke="#ec3f44" strokeWidth="4" strokeLinecap="round" />
          <path d="M303 297L304 279L319 290z" fill="#ec3f44" />
          <path d="M80 484L93 496" stroke="#ec3f44" strokeWidth="4" strokeLinecap="round" />
          <path d="M101 503L86 498L95 488z" fill="#ec3f44" />
        </Arrows>
      </Frame>
    </>
  )
}
